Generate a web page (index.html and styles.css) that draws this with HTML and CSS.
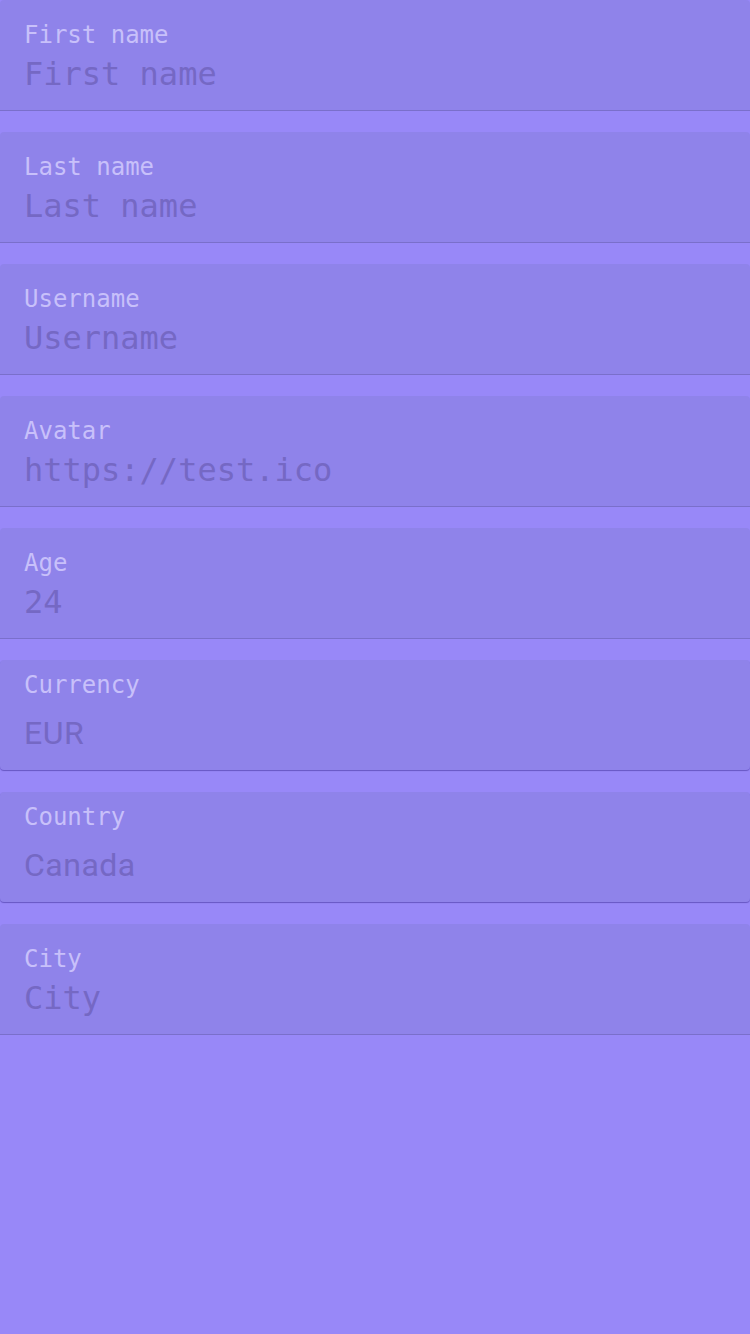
FILE: index.html
```html
<!DOCTYPE html>
<html>
<head>
<meta charset="utf-8">
<link rel="stylesheet" href="styles.css">
</head>
<body>
<form class="form">
  <div class="field">
    <span class="label">First name</span>
    <span class="value">First name</span>
  </div>
  <div class="field">
    <span class="label">Last name</span>
    <span class="value">Last name</span>
  </div>
  <div class="field">
    <span class="label">Username</span>
    <span class="value">Username</span>
  </div>
  <div class="field">
    <span class="label">Avatar</span>
    <span class="value">https://test.ico</span>
  </div>
  <div class="field">
    <span class="label">Age</span>
    <span class="value">24</span>
  </div>
  <div class="field select">
    <span class="label">Currency</span>
    <span class="value">EUR</span>
  </div>
  <div class="field select">
    <span class="label">Country</span>
    <span class="value">Canada</span>
  </div>
  <div class="field">
    <span class="label">City</span>
    <span class="value">City</span>
  </div>
</form>
</body>
</html>
```

FILE: styles.css
```css
html, body {
  margin: 0;
  padding: 0;
}
body {
  background: #9888f8;
  min-height: 1334px;
  font-family: "DejaVu Sans Mono", "Liberation Mono", monospace;
}
.form {
  display: flex;
  flex-direction: column;
  gap: 21px;
}
.field {
  display: flex;
  flex-direction: column;
  box-sizing: border-box;
  height: 111px;
  padding: 21px 24px 0;
  background: #8f83ea;
  border-bottom: 1px solid #7a6fcb;
  border-radius: 4px 4px 0 0;
}
.label {
  font-size: 24px;
  line-height: 28px;
  color: #c8c0fa;
}
.value {
  margin-top: 5px;
  font-size: 32px;
  line-height: 40px;
  color: #7568c4;
}
.field.select {
  height: 110px;
  margin-bottom: 1px;
  padding-top: 11px;
  border-bottom: none;
  border-radius: 4px;
  box-shadow: 0 1px 1px rgba(70, 55, 160, 0.6);
}
.select .value {
  margin-top: 14px;
  font-family: Roboto, "Noto Sans", sans-serif;
  letter-spacing: 0.5px;
}
```
